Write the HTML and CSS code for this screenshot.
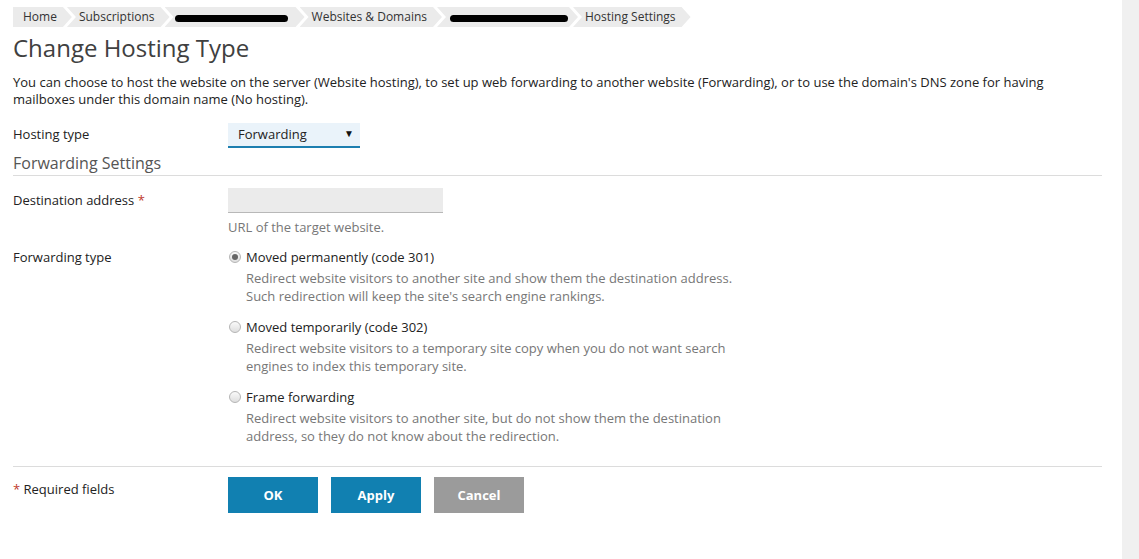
FILE: index.html
```html
<!DOCTYPE html>
<html lang="en">
<head>
  <meta charset="UTF-8">
  <title>Change Hosting Type</title>
  <link rel="stylesheet" href="styles.css">
</head>
<body>
  <div class="page">
    <div class="breadcrumbs">
      <span class="crumb first">Home</span>
      <span class="crumb">Subscriptions</span>
      <span class="crumb"><span class="redacted r1"></span></span>
      <span class="crumb">Websites &amp; Domains</span>
      <span class="crumb"><span class="redacted r2"></span></span>
      <span class="crumb">Hosting Settings</span>
    </div>

    <h1>Change Hosting Type</h1>
    <p class="intro">You can choose to host the website on the server (Website hosting), to set up web forwarding to another website (Forwarding), or to use the domain's DNS zone for having mailboxes under this domain name (No hosting).</p>

    <div class="row row-hosting">
      <div class="label">Hosting type</div>
      <div class="field">
        <div class="select">Forwarding <span class="caret">&#9660;</span></div>
      </div>
    </div>

    <h2 class="section-title">Forwarding Settings</h2>

    <div class="row row-dest">
      <div class="label">Destination address <span class="req">*</span></div>
      <div class="field">
        <div class="input"></div>
        <div class="hint">URL of the target website.</div>
      </div>
    </div>

    <div class="row row-type">
      <div class="label">Forwarding type</div>
      <div class="field">
        <div class="option">
          <div class="option-title"><span class="radio checked"></span>Moved permanently (code 301)</div>
          <div class="option-desc">Redirect website visitors to another site and show them the destination address.<br>Such redirection will keep the site's search engine rankings.</div>
        </div>
        <div class="option">
          <div class="option-title"><span class="radio"></span>Moved temporarily (code 302)</div>
          <div class="option-desc">Redirect website visitors to a temporary site copy when you do not want search<br>engines to index this temporary site.</div>
        </div>
        <div class="option">
          <div class="option-title"><span class="radio"></span>Frame forwarding</div>
          <div class="option-desc">Redirect website visitors to another site, but do not show them the destination<br>address, so they do not know about the redirection.</div>
        </div>
      </div>
    </div>

    <div class="row buttons-row">
      <div class="label"><span class="req">*</span> Required fields</div>
      <div class="field buttons">
        <button class="btn btn-primary">OK</button>
        <button class="btn btn-primary">Apply</button>
        <button class="btn btn-cancel">Cancel</button>
      </div>
    </div>
  </div>
</body>
</html>
```

FILE: styles.css
```css
html {
  background: #f0f0f0;
}
body {
  margin: 0;
  font-family: "Open Sans", "Liberation Sans", Arial, sans-serif;
  font-size: 13px;
  color: #222;
}
.page {
  width: 1089px;
  min-height: 559px;
  background: #fff;
  padding: 7px 20px 0 13px;
}

/* breadcrumbs */
.breadcrumbs {
  display: flex;
  height: 20px;
  font-size: 12px;
  line-height: 20px;
  color: #333;
}
.crumb {
  display: flex;
  align-items: center;
  background: #ebebeb;
  padding: 0 15px 0 12px;
  margin-right: -5px;
  clip-path: polygon(0 0, calc(100% - 9px) 0, 100% 50%, calc(100% - 9px) 100%, 0 100%, 9px 50%);
}
.crumb.first {
  padding-left: 10px;
  clip-path: polygon(0 0, calc(100% - 9px) 0, 100% 50%, calc(100% - 9px) 100%, 0 100%);
}
.redacted {
  display: inline-block;
  height: 7px;
  background: #000;
  border-radius: 4px;
  margin-top: 2px;
}
.redacted.r1 {
  width: 113px;
  margin-left: -2px;
  margin-right: 2px;
}
.redacted.r2 {
  width: 118px;
  margin-left: 1px;
  margin-right: -5px;
}

h1 {
  font-size: 24px;
  font-weight: normal;
  line-height: 30px;
  color: #404040;
  margin: 6px 0 0;
}
.intro {
  line-height: 17px;
  margin: 11px 0 15px;
}

.row {
  display: grid;
  grid-template-columns: 215px 1fr;
}
.label {
  line-height: 18px;
}
.req {
  color: #c0392b;
}

.row-hosting .label {
  padding-top: 2px;
}
.select {
  position: relative;
  width: 122px;
  height: 23px;
  line-height: 23px;
  padding-left: 10px;
  background: #eaf3fa;
  border-bottom: 2px solid #1d7fb0;
  box-sizing: content-box;
}
.caret {
  position: absolute;
  right: 6px;
  top: -1px;
  font-size: 10px;
  color: #111;
}

.section-title {
  font-size: 16px;
  font-weight: normal;
  color: #555;
  line-height: 22px;
  margin: 4px 0 0;
  padding-bottom: 1px;
  border-bottom: 1px solid #dcdcdc;
}

.row-dest {
  margin-top: 12px;
}
.row-dest .label {
  padding-top: 3px;
}
.input {
  width: 215px;
  height: 24px;
  background: #ebebeb;
  border-bottom: 1px solid #b8b8b8;
}
.hint {
  color: #777;
  line-height: 18px;
  margin-top: 5px;
}

.row-type {
  margin-top: 12px;
}
.option {
  margin-bottom: 13px;
}
.option-title {
  display: flex;
  align-items: center;
  line-height: 18px;
}
.radio {
  width: 10px;
  height: 10px;
  border: 1px solid #b5b5b5;
  border-radius: 50%;
  background: linear-gradient(#fafafa, #dedede);
  margin: 0 5px 0 1px;
  position: relative;
}
.radio.checked::after {
  content: '';
  position: absolute;
  left: 2px;
  top: 2px;
  width: 6px;
  height: 6px;
  border-radius: 50%;
  background: #666;
}
.option-desc {
  color: #777;
  line-height: 18px;
  margin-top: 3px;
  padding-left: 18px;
}

.buttons-row {
  margin-top: 8px;
  border-top: 1px solid #dcdcdc;
  padding-top: 10px;
}
.buttons-row .label {
  padding-top: 3px;
}
.buttons {
  display: flex;
  gap: 13px;
}
.btn {
  width: 90px;
  height: 36px;
  border: none;
  color: #fff;
  font-family: "Open Sans", "Liberation Sans", Arial, sans-serif;
  font-size: 13px;
  font-weight: bold;
  cursor: pointer;
}
.btn-primary {
  background: #1180b1;
}
.btn-cancel {
  background: #9b9b9b;
}
```
